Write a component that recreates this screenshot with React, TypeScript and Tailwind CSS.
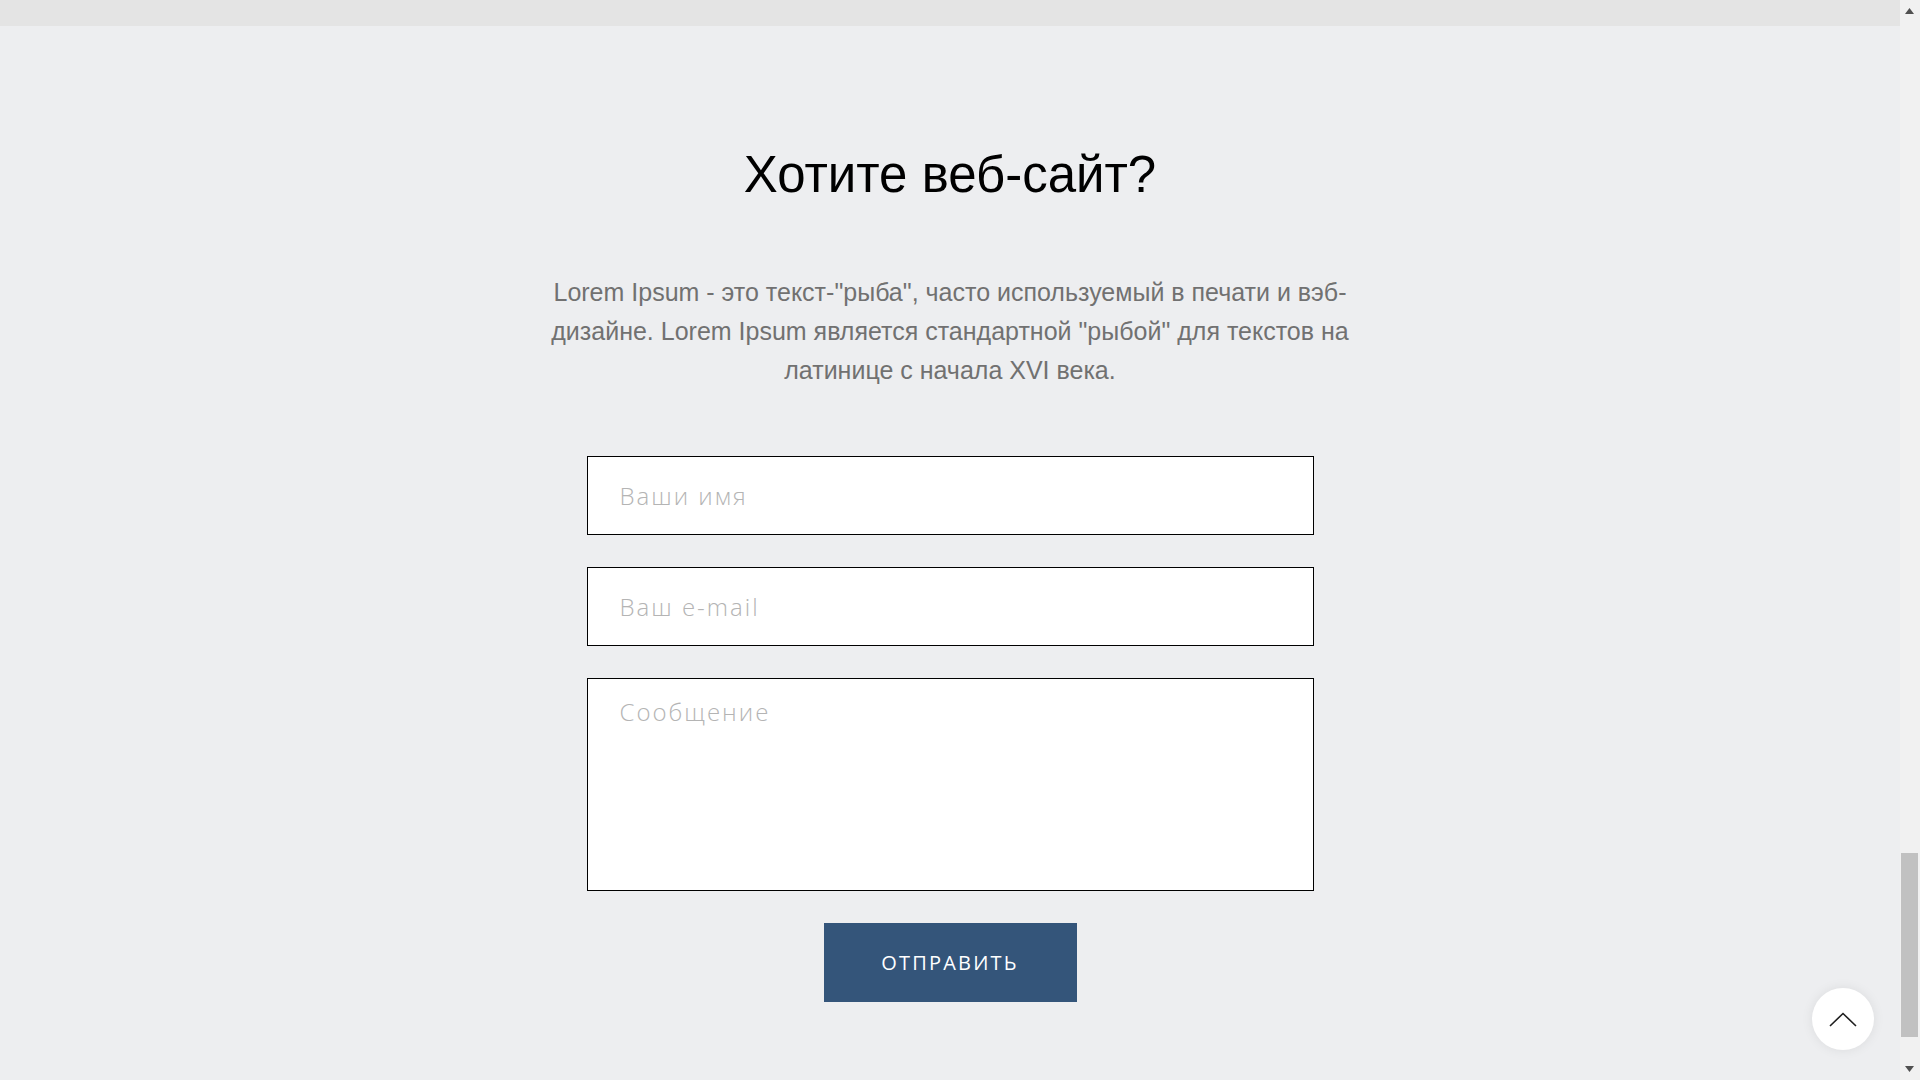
export default function App() {
  const fieldFont = { fontFamily: '"Open Sans", "Lato", sans-serif' };

  return (
    <div className="flex h-[1080px] w-full overflow-hidden bg-[#edeef0]">
      <main className="relative flex-1">
        {/* top strip */}
        <div className="h-[26px] w-full bg-[#e4e4e4]" />

        <section className="flex flex-col items-center">
          <h2 className="mt-[123px] text-[51px] leading-none text-black font-['Liberation_Sans',Arial,sans-serif]">
            Хотите веб-сайт?
          </h2>

          <p className="mt-[73px] max-w-[830px] text-center text-[25px] leading-[39px] text-[#717171] font-['Liberation_Sans',Arial,sans-serif]">
            Lorem Ipsum - это текст-"рыба", часто используемый в печати и вэб-дизайне. Lorem Ipsum является стандартной "рыбой" для текстов на латинице с начала XVI века.
          </p>

          <form className="mt-[66px] flex w-[727px] flex-col items-center gap-[32px]">
            <input
              type="text"
              placeholder="Ваши имя"
              style={fieldFont}
              className="h-[79px] w-full border border-black bg-white px-[32px] text-[24px] font-light tracking-[2px] text-[#333] outline-none placeholder:text-[#b4b4b4]"
            />
            <input
              type="email"
              placeholder="Ваш e-mail"
              style={fieldFont}
              className="h-[79px] w-full border border-black bg-white px-[32px] text-[24px] font-light tracking-[2px] text-[#333] outline-none placeholder:text-[#b4b4b4]"
            />
            <textarea
              placeholder="Сообщение"
              style={fieldFont}
              className="h-[213px] w-full resize-none border border-black bg-white px-[32px] pt-[16px] text-[24px] leading-[33px] font-light tracking-[2px] text-[#333] outline-none placeholder:text-[#b4b4b4]"
            />
            <button
              type="button"
              style={fieldFont}
              className="h-[79px] w-[253px] bg-[#34557a] text-[20px] tracking-[2.2px] text-white"
            >
              ОТПРАВИТЬ
            </button>
          </form>
        </section>

        {/* scroll to top */}
        <button
          type="button"
          className="absolute bottom-[30px] right-[26px] flex h-[62px] w-[62px] items-center justify-center rounded-full bg-white shadow-[0_0_12px_rgba(0,0,0,0.08)]"
        >
          <svg width="28" height="15" viewBox="0 0 28 15" fill="none">
            <path d="M1 14 L14 1.5 L27 14" stroke="#1f1f1f" strokeWidth="1.6" />
          </svg>
        </button>
      </main>

      {/* browser scrollbar */}
      <div className="relative h-full w-[20px] bg-[#f1f1f1]">
        <svg className="absolute left-[5px] top-[8px]" width="9" height="6" viewBox="0 0 9 6">
          <path d="M4.5 0 L9 6 L0 6 Z" fill="#505050" />
        </svg>
        <div className="absolute left-[1px] top-[853px] h-[184px] w-[17px] bg-[#c1c1c1]" />
        <svg className="absolute left-[5px] bottom-[8px]" width="9" height="6" viewBox="0 0 9 6">
          <path d="M0 0 L9 0 L4.5 6 Z" fill="#505050" />
        </svg>
      </div>
    </div>
  );
}
